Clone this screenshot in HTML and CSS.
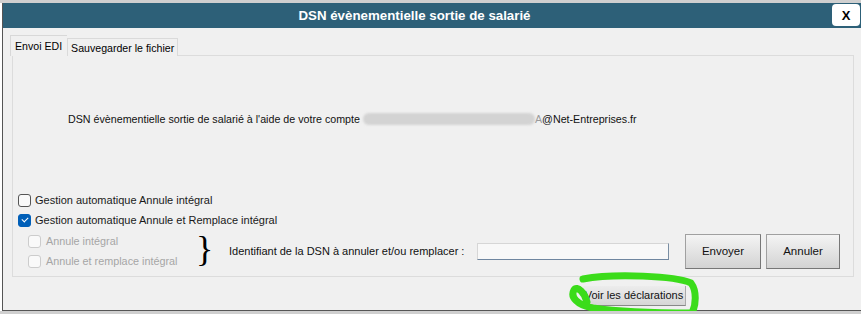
FILE: index.html
```html
<!DOCTYPE html>
<html lang="fr">
<head>
    <meta charset="UTF-8">
    <title>DSN évènementielle sortie de salarié</title>
    <link rel="stylesheet" href="styles.css">
</head>
<body>

<div class="window">
    <div class="titlebar">
        <span class="title">DSN évènementielle sortie de salarié</span>
        <button class="close">X</button>
    </div>

    <div class="content">
        <div class="tabs">
            <span class="tab active">Envoi EDI</span>
            <span class="tab">Sauvegarder le fichier</span>
        </div>

        <div class="panel">
            <p class="info">DSN évènementielle sortie de salarié à l'aide de votre compte <span class="mask"></span><span class="hidden-a">A</span>@Net-Entreprises.fr</p>

            <label class="check"><span class="box"></span>Gestion automatique Annule intégral</label>
            <label class="check"><span class="box checked"></span>Gestion automatique Annule et Remplace intégral</label>

            <div class="ident-row">
                <div class="sub-options">
                    <label class="check disabled"><span class="box"></span>Annule intégral</label>
                    <label class="check disabled"><span class="box"></span>Annule et remplace intégral</label>
                </div>
                <span class="brace">}</span>
                <span class="ident-label">Identifiant de la DSN à annuler et/ou remplacer :</span>
                <input class="ident-input" type="text">
                <button class="btn send">Envoyer</button>
                <button class="btn cancel">Annuler</button>
            </div>
        </div>

        <div class="footer">
            <button class="btn small">Voir les déclarations</button>
            <svg class="scribble" width="140" height="48" viewBox="0 0 140 48">
                <path d="M18 8 C50 2, 110 5, 126 12 C132 20, 131 34, 127 42 C95 42, 55 41, 28 37 C12 34, 5 26, 9 19 C12 14, 20 22, 22 31"
                      fill="none" stroke="#3bdc1a" stroke-width="7" stroke-linecap="round" stroke-linejoin="round"/>
            </svg>
        </div>
    </div>
</div>

</body>
</html>
```

FILE: styles.css
```css
body {
    margin: 0;
    padding: 3px 0 0 2px;
    background: linear-gradient(#cfcfcf 3px, #ffffff 3px);
    font-family: 'Liberation Sans', Arial, sans-serif;
    overflow: hidden;
}

.window {
    width: 862px;
    height: 308px;
    background: #f0f0f0;
    border-left: 1px solid #555;
    border-bottom: 1px solid #555;
    box-sizing: border-box;
}

.titlebar {
    height: 25px;
    background: #2d6078;
    display: flex;
    align-items: center;
    justify-content: center;
    position: relative;
}

.title {
    color: white;
    font-weight: bold;
    font-size: 13.3px;
    margin-left: -38px;
}

.close {
    position: absolute;
    right: 4px;
    top: 1px;
    width: 28px;
    height: 22px;
    border: none;
    border-radius: 4px;
    background: white;
    font-family: 'Liberation Sans', Arial, sans-serif;
    font-weight: bold;
    font-size: 13px;
    padding: 0;
}

.content {
    padding: 7px 0 0 7px;
}

.tabs {
    display: flex;
    align-items: flex-end;
    height: 21px;
    margin-bottom: -1px;
    position: relative;
    z-index: 1;
}

.tab {
    font-size: 10.6px;
    height: 18px;
    line-height: 18px;
    padding: 0 3px;
    border: 1px solid #dadada;
    border-bottom: none;
    box-sizing: border-box;
    background: #f0f0f0;
    white-space: nowrap;
}

.tab.active {
    height: 21px;
    line-height: 20px;
    padding: 0 5px 0 4px;
    border-color: #d8d8d8;
    border-right: none;
}

.panel {
    margin-left: 2px;
    width: 842px;
    height: 222px;
    border: 1px solid #dcdcdc;
    box-sizing: border-box;
    padding: 56px 0 0 5px;
}

.info {
    margin: 0 0 64px 50px;
    font-size: 10.7px;
    line-height: 14px;
    color: #111;
    white-space: nowrap;
}

.mask {
    display: inline-block;
    vertical-align: middle;
    width: 172px;
    height: 12px;
    margin-top: -2px;
    background: #d3d3d3;
    border-radius: 6px;
    filter: blur(1px);
}

.hidden-a {
    color: #9a9a9a;
}

.check {
    display: flex;
    align-items: center;
    height: 20px;
    font-size: 11px;
    color: #1a1a1a;
    white-space: nowrap;
}

.box {
    width: 13px;
    height: 13px;
    border: 1px solid #555;
    border-radius: 3px;
    box-sizing: border-box;
    background: #f9f9f9;
    margin-right: 4px;
    position: relative;
    flex: none;
}

.box.checked {
    background: #005fb8;
    border-color: #005fb8;
}

.box.checked::after {
    content: "";
    position: absolute;
    left: 3px;
    top: 2px;
    width: 5px;
    height: 3px;
    border-left: 1px solid white;
    border-bottom: 1px solid white;
    transform: rotate(-45deg);
}

.check.disabled {
    color: #a6a6a6;
    font-size: 10.8px;
}

.check.disabled .box {
    border-color: #cccccc;
    margin-right: 5px;
}

.ident-row {
    display: flex;
    align-items: center;
    height: 40px;
    margin-top: 1px;
}

.sub-options {
    width: 168px;
    margin-left: 10px;
    flex: none;
}

.brace {
    font-family: 'Liberation Serif', serif;
    font-size: 36px;
    color: #000;
    width: 33px;
    line-height: 34px;
    margin-top: -4px;
    flex: none;
}

.ident-label {
    font-size: 11px;
    width: 248px;
    color: #111;
    flex: none;
}

.ident-input {
    width: 192px;
    height: 17px;
    box-sizing: border-box;
    border: 1px solid #d6d6d6;
    border-right-color: #7a8ea3;
    border-bottom-color: #6f86a0;
    background: #f8f8f8;
    margin: 1px 16px 0 0;
    flex: none;
}

.btn {
    height: 35px;
    font-family: 'Liberation Sans', Arial, sans-serif;
    font-size: 11.5px;
    color: #111;
    background: linear-gradient(#f4f4f4, #d3d3d3);
    border: 1px solid #a0a0a0;
    border-right-color: #777;
    border-bottom-color: #777;
    padding: 0;
    flex: none;
}

.send {
    width: 76px;
    margin-right: 5px;
}

.cancel {
    width: 74px;
}

.footer {
    position: relative;
    height: 32px;
    padding: 8px 0 0 573px;
    box-sizing: border-box;
}

.small {
    width: 103px;
    height: 20px;
    font-size: 11px;
    background: linear-gradient(#ececec, #d6d6d6);
    border: none;
    border-bottom: 1px solid #888;
    border-right: 1px solid #aaa;
}

.scribble {
    position: absolute;
    left: 555px;
    top: -6px;
}
```
